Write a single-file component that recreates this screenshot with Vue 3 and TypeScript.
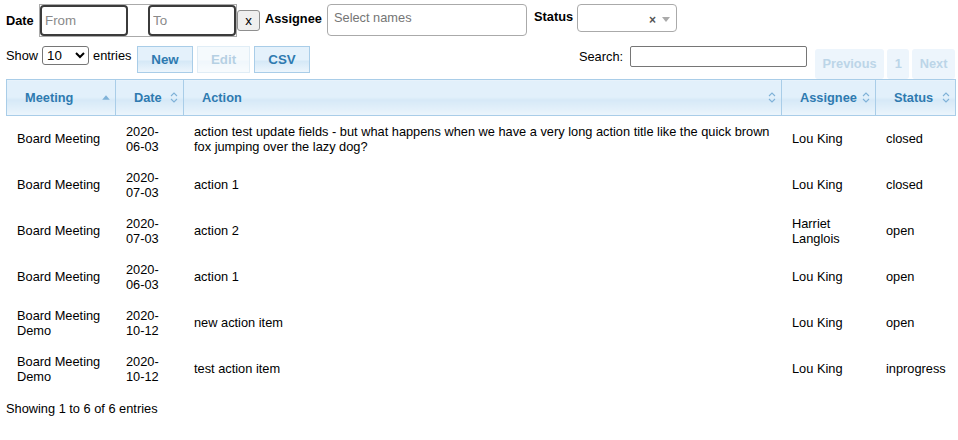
<script setup lang="ts">
interface Row {
  meeting: string;
  date: string;
  action: string;
  assignee: string;
  status: string;
}

const columns = [
  { key: "meeting", label: "Meeting", width: 109, sort: "asc" },
  { key: "date", label: "Date", width: 68, sort: "both" },
  { key: "action", label: "Action", width: 598, sort: "both" },
  { key: "assignee", label: "Assignee", width: 94, sort: "both" },
  { key: "status", label: "Status", width: 80, sort: "both" },
];

const rows: Row[] = [
  {
    meeting: "Board Meeting",
    date: "2020-06-03",
    action:
      "action test update fields - but what happens when we have a very long action title like the quick brown fox jumping over the lazy dog?",
    assignee: "Lou King",
    status: "closed",
  },
  { meeting: "Board Meeting", date: "2020-07-03", action: "action 1", assignee: "Lou King", status: "closed" },
  { meeting: "Board Meeting", date: "2020-07-03", action: "action 2", assignee: "Harriet Langlois", status: "open" },
  { meeting: "Board Meeting", date: "2020-06-03", action: "action 1", assignee: "Lou King", status: "open" },
  { meeting: "Board Meeting Demo", date: "2020-10-12", action: "new action item", assignee: "Lou King", status: "open" },
  { meeting: "Board Meeting Demo", date: "2020-10-12", action: "test action item", assignee: "Lou King", status: "inprogress" },
];
</script>

<template>
  <div class="page">
    <!-- 筛选栏 -->
    <div class="filters">
      <label class="filter-label date-label">Date</label>
      <div class="date-range">
        <input class="date-input" placeholder="From" />
        <input class="date-input" placeholder="To" />
      </div>
      <button class="clear-btn">x</button>
      <label class="filter-label assignee-label">Assignee</label>
      <div class="names-box">Select names</div>
      <label class="filter-label status-label">Status</label>
      <div class="status-box">
        <span class="status-x">×</span>
        <span class="status-caret"></span>
      </div>
    </div>

    <!-- 工具栏 -->
    <div class="toolbar">
      <div class="length">
        <span>Show</span>
        <select class="length-select">
          <option>10</option>
        </select>
        <span>entries</span>
      </div>
      <div class="buttons">
        <button class="dt-btn">New</button>
        <button class="dt-btn disabled">Edit</button>
        <button class="dt-btn">CSV</button>
      </div>
      <div class="search">
        <span>Search:</span>
        <input class="search-input" />
      </div>
      <div class="paging">
        <span class="page-btn">Previous</span>
        <span class="page-btn">1</span>
        <span class="page-btn">Next</span>
      </div>
    </div>

    <table class="data-table">
      <colgroup>
        <col v-for="c in columns" :key="c.key" :style="{ width: c.width + 'px' }" />
      </colgroup>
      <thead>
        <tr>
          <th v-for="c in columns" :key="c.key">
            <div class="th-inner">
              <span class="th-label">{{ c.label }}</span>
              <svg v-if="c.sort === 'asc'" class="sort-icon" width="8" height="11" viewBox="0 0 8 11">
                <path d="M0.2 7.8 L4 3.2 L7.8 7.8 Z" fill="#7fb2d8" />
              </svg>
              <svg v-else class="sort-icon" width="8" height="11" viewBox="0 0 8 11">
                <path d="M1 4 L4 1 L7 4 M1 7 L4 10 L7 7" fill="none" stroke="#7fb2d8" stroke-width="1.1" />
              </svg>
            </div>
          </th>
        </tr>
      </thead>
      <tbody>
        <tr v-for="(r, i) in rows" :key="i">
          <td>{{ r.meeting }}</td>
          <td>{{ r.date }}</td>
          <td>{{ r.action }}</td>
          <td>{{ r.assignee }}</td>
          <td>{{ r.status }}</td>
        </tr>
      </tbody>
    </table>

    <div class="info">Showing 1 to 6 of 6 entries</div>
  </div>
</template>

<style>
body {
  margin: 0;
  background: #fff;
}
</style>

<style scoped>
.page {
  width: 958px;
  height: 440px;
  box-sizing: border-box;
  padding: 4px 3px 0 6px;
  font-family: "Liberation Sans", Arial, sans-serif;
  font-size: 12.8px;
  color: #000;
  overflow: hidden;
}

/* ===== 筛选栏 ===== */
.filters {
  display: flex;
  align-items: flex-start;
  height: 35px;
}

.filter-label {
  font-weight: bold;
  line-height: 14px;
}

.date-label {
  margin-top: 10px;
  width: 27px;
  margin-right: 6px;
}

.date-range {
  display: flex;
  justify-content: space-between;
  width: 198px;
  height: 33px;
  box-sizing: border-box;
  border: 1px solid #aaa;
}

.date-input {
  width: 88px;
  height: 31px;
  box-sizing: border-box;
  border: 2px solid #3b3b3b;
  border-radius: 4px;
  padding: 0 3px;
  font: 13.33px "Liberation Sans", Arial, sans-serif;
  outline: none;
  background: #fff;
}

.date-input::placeholder {
  color: #8a8a8a;
  opacity: 1;
}

.clear-btn {
  width: 23px;
  height: 21px;
  margin: 6px 0 0 0;
  padding: 0;
  border: 1px solid #8f8f8f;
  border-radius: 3px;
  background: #efefef;
  font: 13.33px "Liberation Sans", Arial, sans-serif;
  color: #000;
}

.assignee-label {
  margin: 8px 5px 0 5px;
  width: 57px;
  white-space: nowrap;
}

.names-box {
  width: 200px;
  height: 32px;
  box-sizing: border-box;
  border: 1px solid #aaa;
  border-radius: 4px;
  padding: 5px 6px;
  color: #757575;
  line-height: 16px;
}

.status-label {
  margin: 6px 6px 0 7px;
  width: 37px;
}

.status-box {
  display: flex;
  align-items: center;
  justify-content: flex-end;
  gap: 6px;
  width: 100px;
  height: 28px;
  box-sizing: border-box;
  border: 1px solid #aaa;
  border-radius: 4px;
  padding: 3px 6px 0 0;
}

.status-x {
  color: #555;
  font-size: 12px;
  font-weight: bold;
  line-height: 1;
}

.status-caret {
  width: 0;
  height: 0;
  border-left: 4px solid transparent;
  border-right: 4px solid transparent;
  border-top: 5px solid #aaa;
}

/* ===== 工具栏 ===== */
.toolbar {
  display: flex;
  align-items: flex-start;
  height: 40px;
}

.length {
  display: flex;
  align-items: center;
  gap: 4px;
  height: 19px;
  margin-top: 7px;
  width: 131px;
  white-space: nowrap;
}

.length-select {
  width: 47px;
  height: 19px;
  box-sizing: border-box;
  border: 1px solid #767676;
  border-radius: 3px;
  background: #fff;
  font: 13.33px "Liberation Sans", Arial, sans-serif;
  padding: 0;
}

.buttons {
  display: flex;
  gap: 4px;
  margin-top: 7px;
}

.dt-btn {
  height: 27px;
  width: 56px;
  box-sizing: border-box;
  padding: 0;
  border: 1px solid #a9cde8;
  background: linear-gradient(#e4f1fb 0 50%, #d6e9f7 58%, #ecf5fc 100%);
  font: bold 13.33px "Liberation Sans", Arial, sans-serif;
  color: #2e7ab0;
}

.dt-btn.disabled {
  width: 53px;
  opacity: 0.35;
}

.search {
  display: flex;
  align-items: center;
  gap: 7px;
  height: 21px;
  margin: 7px 0 0 auto;
}

.search-input {
  width: 177px;
  height: 21px;
  box-sizing: border-box;
  border: 1px solid #767676;
  border-radius: 2px;
  padding: 0 2px;
  margin: 0;
}

.paging {
  display: flex;
  gap: 3px;
  margin: 10px 0 0 8px;
}

.page-btn {
  height: 30px;
  padding: 0 7.5px;
  line-height: 29px;
  background: #edf5fc;
  border-radius: 3px;
  font-weight: bold;
  color: #bcd5e8;
}

/* ===== 表格 ===== */
.data-table {
  width: 949px;
  table-layout: fixed;
  border-collapse: collapse;
}

.data-table th {
  height: 35px;
  padding: 0;
  border: 1px solid #a9cde8;
  background: linear-gradient(#e2f0fb 0 47%, #d6e9f7 56%, #ecf5fc 100%);
  color: #2e7ab0;
  font-size: 12.8px;
  font-weight: bold;
}

.th-inner {
  display: flex;
  align-items: center;
  justify-content: space-between;
  padding: 0 5px 0 18px;
}

.th-label {
  flex: 1;
  text-align: left;
}

.sort-icon {
  flex-shrink: 0;
}

.data-table td {
  height: 46px;
  box-sizing: border-box;
  padding: 0 10px 0 10.5px;
  line-height: 15px;
  vertical-align: middle;
}

.info {
  margin-top: 10px;
  line-height: 14px;
}
</style>
